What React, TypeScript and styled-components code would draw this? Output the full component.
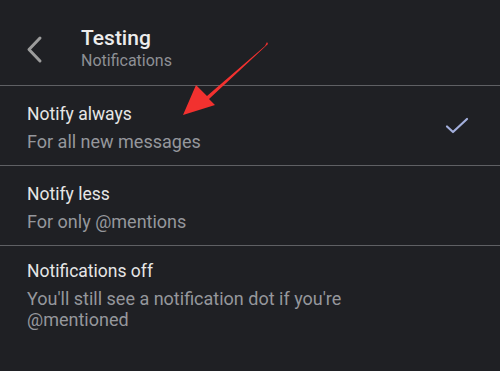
import styled, { createGlobalStyle } from "styled-components";

const GlobalStyle = createGlobalStyle`
  html, body {
    margin: 0;
    padding: 0;
    background: #1f2024;
  }
  body {
    font-family: Roboto, "Noto Sans", "Liberation Sans", sans-serif;
    -webkit-font-smoothing: antialiased;
  }
`;

type Option = {
  title: string;
  subtitle: string;
  selected?: boolean;
};

const options: Option[] = [
  { title: "Notify always", subtitle: "For all new messages", selected: true },
  { title: "Notify less", subtitle: "For only @mentions" },
  {
    title: "Notifications off",
    subtitle: "You'll still see a notification dot if you're @mentioned",
  },
];

const App = () => {
  return (
    <>
      <GlobalStyle />
      <StyledScreen>
        <StyledHeader>
          <StyledBackButton aria-label="Back">
            <svg width="20" height="30" viewBox="0 0 20 30">
              <polyline
                points="14,4 3,15.5 14,27"
                fill="none"
                stroke="#9c9c9c"
                strokeWidth="3"
                strokeLinecap="round"
                strokeLinejoin="round"
              />
            </svg>
          </StyledBackButton>
          <StyledHeading>
            <h1>Testing</h1>
            <span>Notifications</span>
          </StyledHeading>
        </StyledHeader>

        <StyledList>
          {options.map((option) => (
            <StyledRow key={option.title}>
              <StyledRowText>
                <StyledRowTitle>{option.title}</StyledRowTitle>
                <StyledRowSubtitle>{option.subtitle}</StyledRowSubtitle>
              </StyledRowText>
              {option.selected && (
                <StyledCheck width="26" height="20" viewBox="0 0 26 20">
                  <polyline
                    points="3,10.5 9,16 23,3"
                    fill="none"
                    stroke="#a3afdc"
                    strokeWidth="2.2"
                    strokeLinecap="round"
                    strokeLinejoin="round"
                  />
                </StyledCheck>
              )}
            </StyledRow>
          ))}
        </StyledList>

        <StyledArrow width="500" height="371" viewBox="0 0 500 371">
          <polygon
            points="267,42 265,46 207,96 196,85 183,115 215,105 209,99 268,44"
            fill="#f2312f"
          />
        </StyledArrow>
      </StyledScreen>
    </>
  );
};

export default App;

const StyledScreen = styled.div`
  position: relative;
  width: 500px;
  height: 371px;
  overflow: hidden;
  background: #1f2024;
`;

const StyledHeader = styled.header`
  display: flex;
  align-items: center;
  height: 86px;
  box-sizing: border-box;
  padding: 12px 0 0 26px;
  border-bottom: 1.5px solid #5f6064;
`;

const StyledBackButton = styled.button`
  display: flex;
  align-items: center;
  justify-content: center;
  width: 20px;
  height: 30px;
  padding: 0;
  margin-right: 35px;
  background: none;
  border: none;
`;

const StyledHeading = styled.div`
  display: flex;
  flex-direction: column;

  h1 {
    margin: 0;
    font-size: 21px;
    line-height: 26px;
    font-weight: 500;
    color: #ececec;
  }

  span {
    margin-top: -1px;
    font-size: 16px;
    line-height: 22px;
    color: #8e9095;
  }
`;

const StyledList = styled.div`
  display: flex;
  flex-direction: column;
`;

const StyledRow = styled.div`
  display: flex;
  align-items: center;
  justify-content: space-between;
  padding: 16px 30px 12px 27px;
  min-height: 51px;
  border-bottom: 1.5px solid #5f6064;

  &:last-child {
    border-bottom: none;
    padding-top: 14px;
  }
`;

const StyledRowText = styled.div`
  display: flex;
  flex-direction: column;
  gap: 6px;
  max-width: 340px;
`;

const StyledRowTitle = styled.div`
  font-size: 17.5px;
  line-height: 22px;
  color: #e6e6e6;
`;

const StyledRowSubtitle = styled.div`
  font-size: 18px;
  line-height: 21px;
  color: #95979c;
`;

const StyledCheck = styled.svg`
  margin-bottom: 4px;
`;

const StyledArrow = styled.svg`
  position: absolute;
  top: 0;
  left: 0;
  pointer-events: none;
`;
